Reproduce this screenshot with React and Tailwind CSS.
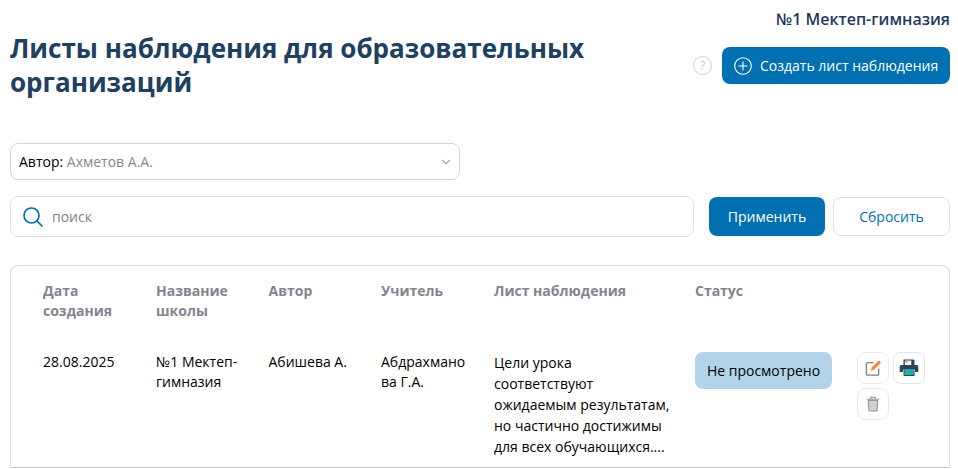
import { ChevronDown } from 'lucide-react';

function EditIcon() {
  return (
    <svg width="18" height="18" viewBox="0 0 18 18" fill="none">
      <path d="M9.500 3.700H3.500a1.200 1.200 0 0 0-1.200 1.200v10a1.200 1.200 0 0 0 1.200 1.200h10a1.200 1.200 0 0 0 1.200-1.200V9.500" stroke="#7f7f7f" strokeWidth="1.300" />
      <path d="M6.800 11.800l.9-3.300 6.400-6.400a1.200 1.200 0 0 1 1.700 0l.6.600a1.200 1.200 0 0 1 0 1.700l-6.400 6.400z" fill="#f58a3c" />
    </svg>
  );
}

function PrintIcon() {
  return (
    <svg width="20" height="18" viewBox="0 0 20 18">
      <path d="M4.500 0.500h10l1 1V6h-11z" fill="#2f4256" />
      <path d="M5.800 1.500h6.500V6H5.800z" fill="#f5f5f5" />
      <path d="M6.500 2.200h2v1.300h-2z" fill="#e0603a" />
      <path d="M2 6h16a1.500 1.500 0 0 1 1.300 1.500V13H16v-2.500H4V13H0.700V7.500A1.500 1.500 0 0 1 2 6z" fill="#2f4256" />
      <path d="M4.500 10.500h11V17h-11z" fill="#2f4256" />
      <path d="M5.500 10.500h9V16h-9z" fill="#22b58c" />
      <path d="M9 10.500h5.500V14H9z" fill="#1fa6d0" />
    </svg>
  );
}

function TrashIcon() {
  return (
    <svg width="14" height="16" viewBox="0 0 14 16" fill="none">
      <path d="M2.300 4.500h9.400l-.6 9.600a1 1 0 0 1-1 .9H3.900a1 1 0 0 1-1-.9z" fill="#d2d2d2" stroke="#8f9499" strokeWidth="1.100" />
      <path d="M0.800 3.300h12.400M4.800 3V1.200h4.400V3" stroke="#8f9499" strokeWidth="1.100" />
    </svg>
  );
}

export default function App() {
  return (
    <div className="h-[469px] overflow-hidden bg-white pl-2.5 pr-2 font-['Open_Sans',sans-serif] text-sm text-black">
      <div className="flex h-[30px] items-end justify-end text-base font-semibold leading-[22px] text-[#1f3a5c]">
        №1 Мектеп-гимназия
      </div>

      <div className="flex items-start justify-between">
        <h1 className="mt-px w-[640px] text-[26px] font-bold leading-[34px] text-[#20405f]">
          Листы наблюдения для образовательных организаций
        </h1>
        <div className="mt-[17px] flex items-center gap-[10px]">
          <span className="flex h-[19px] w-[19px] items-center justify-center rounded-full border border-[#d0d0d0] text-xs text-[#c4c4c4]">?</span>
          <button className="flex h-[37px] w-[228px] items-center gap-2 rounded-lg bg-[#0070b0] pl-3 text-sm text-white">
            <svg width="18" height="18" viewBox="0 0 18 18" fill="none" stroke="white" strokeWidth="1.100">
              <circle cx="9" cy="9" r="8.300" />
              <path d="M9 4.500v9M4.500 9h9" />
            </svg>
            Создать лист наблюдения
          </button>
        </div>
      </div>

      <div className="mt-11 flex h-[37px] w-[450px] items-center justify-between rounded-lg border border-[#ccd6e0] pl-2 pr-[6px] text-sm">
        <span>Автор: <span className="text-[#8a8a8a]">Ахметов А.А.</span></span>
        <ChevronDown size={14} className="text-[#a8a8a8]" />
      </div>

      <div className="mt-4 flex items-center">
        <div className="flex h-[41px] flex-1 items-center gap-2 rounded-lg border border-[#d9e2ec] pl-[11px] text-sm text-[#808080]">
          <svg width="22" height="22" viewBox="0 0 22 22" fill="none" stroke="#0070b0" strokeWidth="1.700">
            <circle cx="9.500" cy="9.500" r="7.500" />
            <path d="M15 15l5.500 5.500" />
          </svg>
          поиск
        </div>
        <button className="ml-[15px] h-[39px] w-[116px] rounded-lg bg-[#0070b0] text-sm font-medium text-white">Применить</button>
        <button className="ml-2 h-[39px] w-[117px] rounded-lg border border-[#d9e2ec] text-sm text-[#0070b0]">Сбросить</button>
      </div>

      <div className="mt-[28px] h-[203px] rounded-t-lg border border-[#d5dfe9] border-b-[#c8c8c8] pl-[32px] pt-[15px]">
        <div className="grid grid-cols-[113px_112.500px_112.500px_113px_201px_162px_1fr] text-sm leading-[20px]">
          <div className="w-[90px] font-bold text-[#84848f]">Дата создания</div>
          <div className="w-[90px] font-bold text-[#84848f]">Название школы</div>
          <div className="font-bold text-[#84848f]">Автор</div>
          <div className="font-bold text-[#84848f]">Учитель</div>
          <div className="font-bold text-[#84848f]">Лист наблюдения</div>
          <div className="font-bold text-[#84848f]">Статус</div>
          <div />

          <div className="mt-[31px]">28.08.2025</div>
          <div className="mt-[31px] w-[90px]">№1 Мектеп-гимназия</div>
          <div className="mt-[31px]">Абишева А.</div>
          <div className="mt-[31px] w-[90px] break-all">Абдрахманова Г.А.</div>
          <div className="mt-[31px] w-[180px] leading-[21px]">
            Цели урока соответствуют ожидаемым результатам, но частично достижимы для всех обучающихся....
          </div>
          <div className="mt-[31px]">
            <div className="flex h-[37px] w-[137px] items-center justify-center rounded-lg bg-[#b3d4e8]">Не просмотрено</div>
          </div>
          <div className="mt-[31px] flex w-[72px] flex-wrap content-start gap-[4px]">
            <button className="flex h-8 w-8 items-center justify-center rounded-lg border border-[#eaeaea]"><EditIcon /></button>
            <button className="flex h-8 w-8 items-center justify-center rounded-lg border border-[#dde5f0]"><PrintIcon /></button>
            <button className="flex h-8 w-8 items-center justify-center rounded-lg border border-[#eaeaea]"><TrashIcon /></button>
          </div>
        </div>
      </div>
    </div>
  );
}
